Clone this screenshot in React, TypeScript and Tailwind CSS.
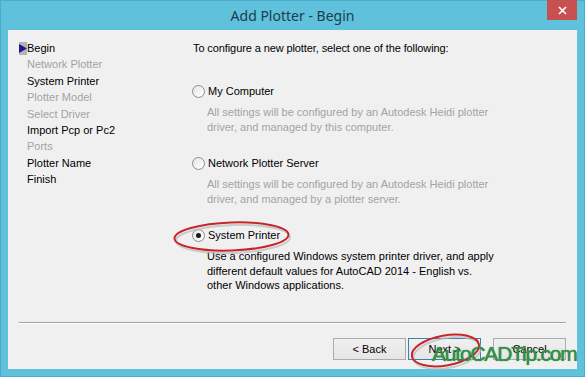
import React from 'react'

const steps = [
    { label: 'Begin', active: true },
    { label: 'Network Plotter', active: false },
    { label: 'System Printer', active: true },
    { label: 'Plotter Model', active: false },
    { label: 'Select Driver', active: false },
    { label: 'Import Pcp or Pc2', active: true },
    { label: 'Ports', active: false },
    { label: 'Plotter Name', active: true },
    { label: 'Finish', active: true },
]

const options = [
    {
        label: 'My Computer',
        checked: false,
        lines: ['All settings will be configured by an Autodesk Heidi plotter', 'driver, and managed by this computer.'],
    },
    {
        label: 'Network Plotter Server',
        checked: false,
        lines: ['All settings will be configured by an Autodesk Heidi plotter', 'driver, and managed by a plotter server.'],
    },
    {
        label: 'System Printer',
        checked: true,
        lines: [
            'Use a configured Windows system printer driver, and apply',
            'different default values for AutoCAD 2014 - English vs.',
            'other Windows applications.',
        ],
    },
]

function Radio({ checked }: { checked: boolean }) {
    return (
        <span className="flex h-[13px] w-[13px] items-center justify-center rounded-full border border-[#8c8c8c] bg-gradient-to-br from-[#e6e6e6] to-white">
            {checked && <span className="h-[5px] w-[5px] rounded-full bg-[#1a1a1a]" />}
        </span>
    )
}

export default function App() {
    return (
        <div className="relative flex h-[377px] w-[585px] flex-col border border-[#4aaccb] bg-[#60c1dd] font-['Liberation_Sans',Arial,sans-serif] text-[11px]">
            <div className="relative flex h-[29px] items-center justify-center">
                <span className="font-['Noto_Sans',sans-serif] text-[14px] text-[#1d3d4b]">Add Plotter - Begin</span>
                <div className="absolute right-[7px] top-[-1px] flex h-[20px] w-[30px] items-center justify-center bg-[#c75050]">
                    <svg width="9" height="9" viewBox="0 0 9 9">
                        <path d="M1 1 L8 8 M8 1 L1 8" stroke="#fff" strokeWidth="1.6" />
                    </svg>
                </div>
            </div>

            <div className="mx-[7px] mb-[7px] flex flex-1 flex-col bg-[#f0f0f0]">
                <div className="flex h-[292px]">
                    <div className="w-[184px] pl-[11px] pt-[10px]">
                        {steps.map((s, i) => (
                            <div key={s.label} className="flex h-[16.4px] items-center">
                                <span className="flex h-[13px] w-[8px] items-center">
                                    {i === 0 && (
                                        <span className="flex h-[13px] w-[8px] items-center bg-[#b4b4b4]">
                                            <svg width="8" height="9" viewBox="0 0 8 9">
                                                <path d="M0 0 L8 4.5 L0 9 Z" fill="#1c1c8a" />
                                            </svg>
                                        </span>
                                    )}
                                </span>
                                <span className={s.active ? 'text-black' : 'text-[#a3a3a3]'}>{s.label}</span>
                            </div>
                        ))}
                    </div>

                    <div className="flex-1 pt-[10px]">
                        <div className="flex h-[16px] items-center pl-[1px] tracking-[-0.1px] text-black">
                            To configure a new plotter, select one of the following:
                        </div>
                        <div className="mt-[27px] flex flex-col gap-[21px]">
                            {options.map((o) => (
                                <div key={o.label}>
                                    <div className="flex h-[16px] items-center gap-[3px]">
                                        <Radio checked={o.checked} />
                                        <span className="text-black">{o.label}</span>
                                    </div>
                                    <div className={`mt-[6px] pl-[15px] leading-[14.5px] ${o.checked ? 'text-black' : 'text-[#a3a3a3]'}`}>
                                        {o.lines.map((l) => (
                                            <div key={l}>{l}</div>
                                        ))}
                                    </div>
                                </div>
                            ))}
                        </div>
                    </div>
                </div>

                <div className="mx-[11px] border-t border-b border-t-[#a0a0a0] border-b-white" />

                <div className="mr-[11px] mt-[14px] flex justify-end">
                    <button className="h-[22px] w-[73px] border border-[#acacac] bg-gradient-to-b from-[#f0f0f0] to-[#e5e5e5] text-black">&lt; Back</button>
                    <button className="ml-[2px] h-[22px] w-[73px] border border-[#3c7fb1] bg-gradient-to-b from-[#f0f0f0] to-[#e5e5e5] text-black">Next &gt;</button>
                    <button className="ml-[12px] h-[22px] w-[73px] border border-[#acacac] bg-gradient-to-b from-[#f0f0f0] to-[#e5e5e5] text-black">Cancel</button>
                </div>
            </div>

            <svg className="pointer-events-none absolute left-0 top-0" width="585" height="377">
                <ellipse cx="232" cy="238" rx="57" ry="14" transform="rotate(-2 232 238)" fill="none" stroke="#b9b9b9" strokeWidth="2" opacity="0.7" />
                <ellipse cx="230.5" cy="235.5" rx="57" ry="14" transform="rotate(-2 230 236)" fill="none" stroke="#c7252a" strokeWidth="2" />
                <ellipse cx="446" cy="352" rx="34" ry="15" transform="rotate(-10 446 352)" fill="none" stroke="#b9b9b9" strokeWidth="2" opacity="0.7" />
                <ellipse cx="444.5" cy="349.5" rx="34" ry="15" transform="rotate(-10 444 350)" fill="none" stroke="#c7252a" strokeWidth="2" />
            </svg>

            <div className="pointer-events-none absolute left-[431px] top-[342px] font-['Liberation_Sans',Arial,sans-serif] text-[21px] leading-none tracking-[-1.2px] text-[#2f9447] [text-shadow:0_0_1px_#1f5f2c]">
                AutoCADTip.com
            </div>
        </div>
    )
}
